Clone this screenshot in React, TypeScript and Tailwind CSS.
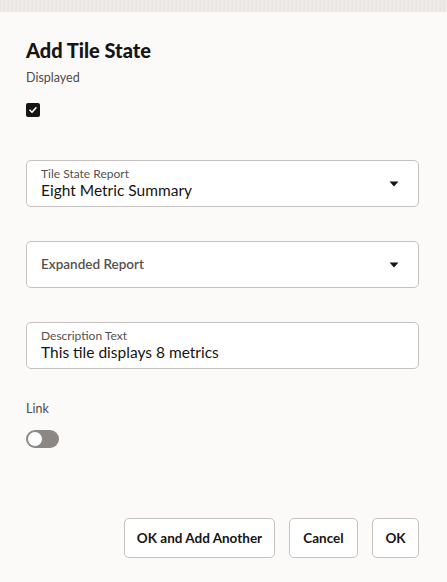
import { useState } from 'react'

const font = { fontFamily: 'Lato, "Noto Sans", sans-serif' }

function Caret() {
  return (
    <svg width="10" height="6" viewBox="0 0 10 6" className="shrink-0">
      <path d="M0.5 0.5h9L5 5.5z" fill="#161513" />
    </svg>
  )
}

interface SelectFieldProps {
  label: string
  value?: string
}

const SelectField: React.FC<SelectFieldProps> = ({ label, value }) => (
  <div className="flex h-[47px] items-center rounded-[5px] border border-[#c4c1bf] bg-white pl-[14px] pr-[19px]">
    <div className="flex min-w-0 flex-1 flex-col">
      {value
        ? (
            <>
              <span className="text-[12px] leading-[14px] text-[#55514e]">{label}</span>
              <span className="text-[15.5px] leading-[19px] text-[#161513]">{value}</span>
            </>
          )
        : (
            <span className="text-[13.5px] font-semibold text-[#55514e]">{label}</span>
          )}
    </div>
    <Caret />
  </div>
)

export default function App() {
  const [displayed, setDisplayed] = useState(true)
  const [link, setLink] = useState(false)

  return (
    <div className="flex min-h-[582px] w-[447px] flex-col bg-[#fcfaf9]" style={font}>
      {/* textured strip along the top edge */}
      <div className="h-[12px] bg-[repeating-linear-gradient(90deg,#e6e2df_0px,#f1eeec_2px,#e9e5e2_4px)]" />

      <div className="flex flex-1 flex-col pl-[26px] pr-[28px]">
        <h1 className="mt-[26px] text-[20px] font-black leading-[24px] text-[#161513]">
          Add Tile State
        </h1>

        <span className="mt-[8px] text-[12.5px] leading-[16px] text-[#4f4b48]">Displayed</span>
        <button
          type="button"
          onClick={() => setDisplayed(d => !d)}
          className="mt-[17px] flex h-[14px] w-[14px] items-center justify-center rounded-[2px] bg-[#161513]"
        >
          {displayed && (
            <svg width="10" height="10" viewBox="0 0 10 10">
              <path d="M2 5.2l2 2L8 2.8" fill="none" stroke="white" strokeWidth="1.6" strokeLinecap="round" strokeLinejoin="round" />
            </svg>
          )}
        </button>

        <div className="mt-[43px]">
          <SelectField label="Tile State Report" value="Eight Metric Summary" />
        </div>
        <div className="mt-[34px]">
          <SelectField label="Expanded Report" />
        </div>

        <div className="mt-[34px] flex h-[47px] flex-col justify-center rounded-[5px] border border-[#c4c1bf] bg-white pl-[14px]">
          <span className="text-[12px] leading-[14px] text-[#55514e]">Description Text</span>
          <span className="text-[15.5px] leading-[19px] text-[#161513]">This tile displays 8 metrics</span>
        </div>

        <span className="mt-[32px] text-[12.5px] leading-[16px] text-[#4f4b48]">Link</span>
        <button
          type="button"
          onClick={() => setLink(l => !l)}
          className={`mt-[13px] flex h-[18px] w-[33px] items-center rounded-full p-[1px] ${link ? 'justify-end bg-[#227e9e]' : 'justify-start bg-[#8a8785]'}`}
        >
          <span className="h-[16px] w-[16px] rounded-full border border-[#8a8785] bg-white" />
        </button>

        <div className="mt-[70px] flex justify-end gap-[14px]">
          <button type="button" className="h-[40px] w-[151px] rounded-[5px] border border-[#c4c1bf] bg-white text-[13.5px] font-bold text-[#161513]">
            OK and Add Another
          </button>
          <button type="button" className="h-[40px] w-[69px] rounded-[5px] border border-[#c4c1bf] bg-white text-[13.5px] font-bold text-[#161513]">
            Cancel
          </button>
          <button type="button" className="h-[40px] w-[47px] rounded-[5px] border border-[#c4c1bf] bg-white text-[13.5px] font-bold text-[#161513]">
            OK
          </button>
        </div>
      </div>
    </div>
  )
}
